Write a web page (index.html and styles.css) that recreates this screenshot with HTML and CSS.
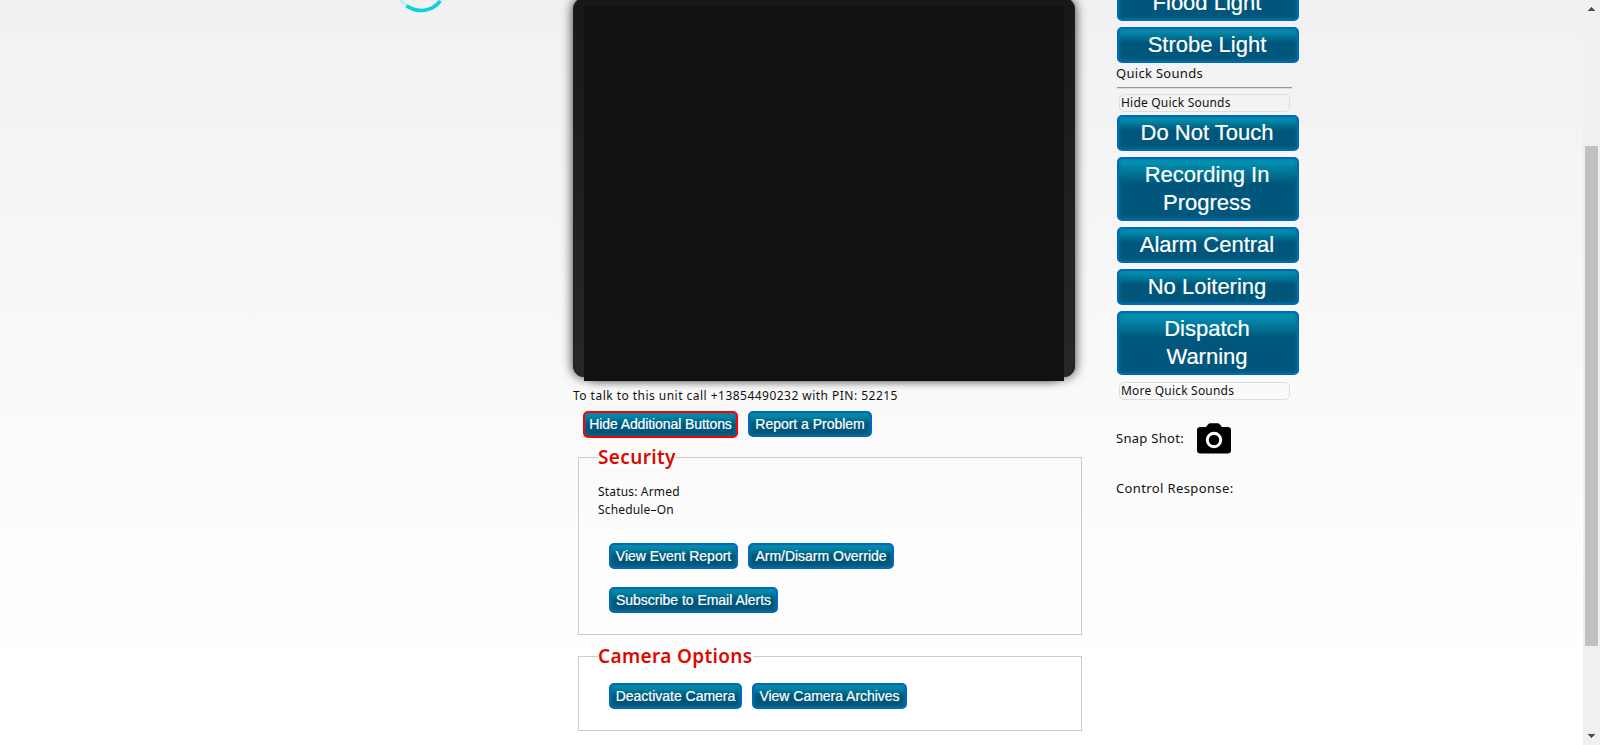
FILE: index.html
```html
<!DOCTYPE html>
<html lang="en">
<head>
<meta charset="utf-8">
<title>Camera Control</title>
<link rel="stylesheet" href="styles.css">
</head>
<body>
<div class="page">
  <aside class="loading">
    <svg class="spinner" width="54" height="54" viewBox="0 0 54 54" fill="none" stroke-width="3.6">
      <circle cx="27" cy="27" r="24.5" stroke="#c5edf0"/>
      <path d="M12.6 46.8A24.5 24.5 0 0 0 46.2 42.2" stroke="#09cfdf"/>
    </svg>
  </aside>
  <main class="main">
    <div class="monitor"><div class="video"></div></div>
    <p class="talk">To talk to this unit call +13854490232 with PIN: 52215</p>
    <div class="row top-row">
      <button class="btn active w-hide">Hide Additional Buttons</button>
      <button class="btn w-report">Report a Problem</button>
    </div>
    <section class="box security">
      <h2 class="legend">Security</h2>
      <p class="status">Status: Armed<br>Schedule–On</p>
      <div class="row">
        <button class="btn w-event">View Event Report</button>
        <button class="btn w-arm">Arm/Disarm Override</button>
      </div>
      <div class="row second">
        <button class="btn w-sub">Subscribe to Email Alerts</button>
      </div>
    </section>
    <section class="box camera">
      <h2 class="legend">Camera Options</h2>
      <div class="row">
        <button class="btn w-deact">Deactivate Camera</button>
        <button class="btn w-arch">View Camera Archives</button>
      </div>
    </section>
  </main>
  <aside class="controls">
    <button class="big">Flood Light</button>
    <button class="big">Strobe Light</button>
    <p class="label heading">Quick Sounds</p>
    <hr class="rule">
    <div class="toggle hide">Hide Quick Sounds</div>
    <button class="big">Do Not Touch</button>
    <button class="big">Recording In Progress</button>
    <button class="big">Alarm Central</button>
    <button class="big">No Loitering</button>
    <button class="big">Dispatch Warning</button>
    <div class="toggle more">More Quick Sounds</div>
    <div class="snap">
      <span class="label">Snap Shot:</span>
      <svg class="cam" width="34" height="31" viewBox="0 0 34 31">
        <path d="M3.5 4H9l2-2.6Q12 .2 13.400 .2h7.200Q22 .2 23 1.400L25 4h5.500Q34 4 34 7.300v19.900q0 3.300-3.500 3.300h-27Q0 30.500 0 27.200V7.300Q0 4 3.500 4Z"/>
        <circle cx="17" cy="17" r="6.700" fill="#000" stroke="#fff" stroke-width="3"/>
      </svg>
    </div>
    <p class="label response">Control Response:</p>
  </aside>
  <div class="scrollbar">
    <svg width="7" height="4" viewBox="0 0 7 4"><path d="M3 0h1v1h1v1h1v1h1v1H0V3h1V2h1V1h1z" fill="#505050"/></svg>
    <div class="thumb"></div>
    <svg width="7" height="4" viewBox="0 0 7 4"><path d="M0 0h7v1H6v1H5v1H4v1H3V3H2V2H1V1H0z" fill="#505050"/></svg>
  </div>
</div>
</body>
</html>
```
FILE: styles.css
```css
* { box-sizing: border-box; }
body { margin: 0; background: #fff; }
p, h2 { margin: 0; }
.page {
  display: grid;
  grid-template-columns: 573px 544px 466px 17px;
  height: 745px;
  overflow: hidden;
  background: linear-gradient(#f1f1f1, #fafafa 54%, #fff 92%);
  color: #111;
  font-family: "Noto Sans", "Open Sans", sans-serif;
  font-size: 12px;
  white-space: nowrap;
}
.loading { padding-left: 394px; }
.spinner { display: block; margin-top: -41px; }

.monitor {
  width: 502px;
  height: 379px;
  margin-top: -2px;
  padding: 8px 11px 0;
  border-radius: 11px;
  background: linear-gradient(#181818, #26282b);
  box-shadow: 0 0 12px rgba(0, 0, 0, .8), inset 0 0 1px 1px #222;
}
.video { height: 375px; background: #111; box-shadow: 0 7px 9px -7px rgba(0, 0, 0, .5); }
.talk { height: 34px; padding-top: 10px; line-height: 18px; letter-spacing: .47px; }
.row { display: flex; gap: 10px; align-items: flex-start; padding-left: 10px; }
.btn, .big {
  padding: 0;
  border: 2px solid #0069bd;
  border-radius: 5px;
  background: linear-gradient(#0399b9, #00577b 50%);
  box-shadow: inset 0 0 3px 1px rgba(8, 120, 141, .7);
  color: #fff;
  font-family: "Liberation Sans", Arial, sans-serif;
  -webkit-text-stroke: .2px #fff;
}
.btn { height: 26px; font-size: 14px; letter-spacing: -.02px; line-height: 21px; white-space: nowrap; }
.active { height: 27px; border-color: #f00; letter-spacing: -.1px; }
.w-hide { width: 155px; }
.w-report { width: 124px; }
.w-event { width: 129px; }
.w-arm { width: 146px; }
.w-sub { width: 169px; }
.w-deact { width: 133px; }
.w-arch { width: 155px; }

.box { width: 504px; margin-left: 5px; padding: 0 20px 0 19px; border: 1px solid #ccc; }
.box .row { padding-left: 11px; }
.security { height: 178px; margin-top: 19px; }
.camera { height: 75px; margin-top: 21px; }
.legend {
  width: max-content;
  height: 19px;
  margin-top: -10px;
  background: #fefefe;
  color: #d90b00;
  font-size: 19px;
  font-weight: 600;
  letter-spacing: .35px;
  line-height: 18px;
}
.status { height: 76px; padding-top: 16px; line-height: 18px; letter-spacing: .17px; }
.second { margin-top: 18px; }
.camera .row { padding-top: 17px; }

.controls { width: 182px; }
.big {
  display: block;
  width: 182px;
  margin: 0 0 6px;
  padding: 2px 21px 2px 19px;
  background: linear-gradient(#0399b9, #00577b 42%);
  font-size: 22px;
  line-height: 28px;
  white-space: normal;
}
.big:first-child { margin-top: -15px; }
.label { margin-left: -1px; font-size: 13px; line-height: 20px; letter-spacing: .3px; }
.heading { height: 23px; margin-top: -6px; }
.rule { width: 175px; height: 2px; margin: 1px 0 5px; border: 0; border-top: 1px solid #999; border-bottom: 1px solid #ddd; }
.toggle {
  width: 171px;
  height: 18px;
  margin-left: 2px;
  padding-left: 1px;
  border: 1px solid #ddd;
  border-radius: 5px;
  line-height: 16px;
  letter-spacing: .2px;
}
.hide { margin-bottom: 3px; }
.more { margin-top: 7px; }
.snap { display: flex; align-items: center; height: 31px; margin-top: 23px; }
.snap .label { width: 81px; padding-bottom: 2px; }
.response { margin-top: 24px; letter-spacing: .38px; }

.scrollbar { display: flex; flex-direction: column; align-items: center; padding-top: 7px; background: #f0f0f0; }
.thumb { width: 13px; height: 500px; margin: 135px 0 88px; background: #c1c1c1; }
```
